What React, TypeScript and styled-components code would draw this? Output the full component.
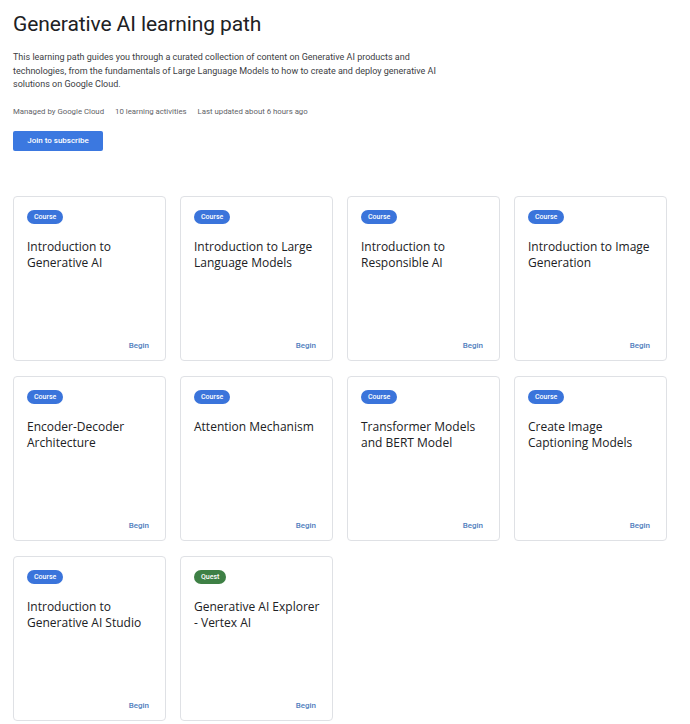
import React from "react";
import styled, { createGlobalStyle } from "styled-components";

const GlobalStyle = createGlobalStyle`
  html, body {
    margin: 0;
    padding: 0;
    background: #ffffff;
  }
  body {
    font-family: Roboto, "Liberation Sans", Arial, sans-serif;
    color: #202124;
  }
`;

const Page = styled.div`
  padding: 9px 13px 0 13px;
  width: 654px;
`;

const Title = styled.h1`
  margin: 0;
  font-family: Roboto, "Open Sans", sans-serif;
  font-size: 21px;
  font-weight: 400;
  letter-spacing: -0.1px;
  line-height: 30px;
  color: #202124;
`;

const Intro = styled.p`
  margin: 12px 0 0 0;
  width: 440px;
  font-size: 9px;
  line-height: 13.5px;
  color: #3c4043;
`;

const Meta = styled.div`
  display: flex;
  gap: 11px;
  margin-top: 14px;
  font-size: 7.8px;
  line-height: 12px;
  color: #5f6368;
`;

const JoinButton = styled.button`
  display: block;
  margin-top: 13px;
  width: 90px;
  height: 20px;
  padding: 0;
  border: none;
  border-radius: 2px;
  background: #3b78e0;
  color: #ffffff;
  font-family: Roboto, sans-serif;
  font-size: 8px;
  font-weight: 500;
`;

const Grid = styled.div`
  display: grid;
  grid-template-columns: repeat(4, 153px);
  grid-auto-rows: 165px;
  column-gap: 14px;
  row-gap: 15px;
  margin-top: 45px;
`;

const Card = styled.div`
  box-sizing: border-box;
  display: flex;
  flex-direction: column;
  padding: 13px 8px 10px 13px;
  border: 1px solid #dfe1e5;
  border-radius: 4px;
  background: #ffffff;
`;

const Badge = styled.span<{ $kind: "Course" | "Quest" }>`
  align-self: flex-start;
  height: 14px;
  padding: 0 7px;
  border-radius: 7px;
  background: ${(p) => (p.$kind === "Quest" ? "#3e8045" : "#3a74db")};
  color: #ffffff;
  font-size: 7px;
  font-weight: 500;
  line-height: 14px;
`;

const CardTitle = styled.div`
  margin-top: 15px;
  font-family: "Open Sans", Roboto, sans-serif;
  font-size: 12px;
  line-height: 16px;
  color: #202124;
  flex-grow: 1;
`;

const Begin = styled.span`
  align-self: flex-end;
  margin-right: 8px;
  font-size: 8px;
  font-weight: 500;
  color: #4f7dbd;
`;

type Item = { kind: "Course" | "Quest"; title: string };

const items: Item[] = [
  { kind: "Course", title: "Introduction to Generative AI" },
  { kind: "Course", title: "Introduction to Large Language Models" },
  { kind: "Course", title: "Introduction to Responsible AI" },
  { kind: "Course", title: "Introduction to Image Generation" },
  { kind: "Course", title: "Encoder-Decoder Architecture" },
  { kind: "Course", title: "Attention Mechanism" },
  { kind: "Course", title: "Transformer Models and BERT Model" },
  { kind: "Course", title: "Create Image Captioning Models" },
  { kind: "Course", title: "Introduction to Generative AI Studio" },
  { kind: "Quest", title: "Generative AI Explorer - Vertex AI" },
];

export default function App() {
  return (
    <Page>
      <GlobalStyle />
      <Title>Generative AI learning path</Title>
      <Intro>
        This learning path guides you through a curated collection of content
        on Generative AI products and technologies, from the fundamentals of
        Large Language Models to how to create and deploy generative AI
        solutions on Google Cloud.
      </Intro>
      <Meta>
        <span>Managed by Google Cloud</span>
        <span>10 learning activities</span>
        <span>Last updated about 6 hours ago</span>
      </Meta>
      <JoinButton>Join to subscribe</JoinButton>
      <Grid>
        {items.map((it) => (
          <Card key={it.title}>
            <Badge $kind={it.kind}>{it.kind}</Badge>
            <CardTitle>{it.title}</CardTitle>
            <Begin>Begin</Begin>
          </Card>
        ))}
      </Grid>
    </Page>
  );
}
